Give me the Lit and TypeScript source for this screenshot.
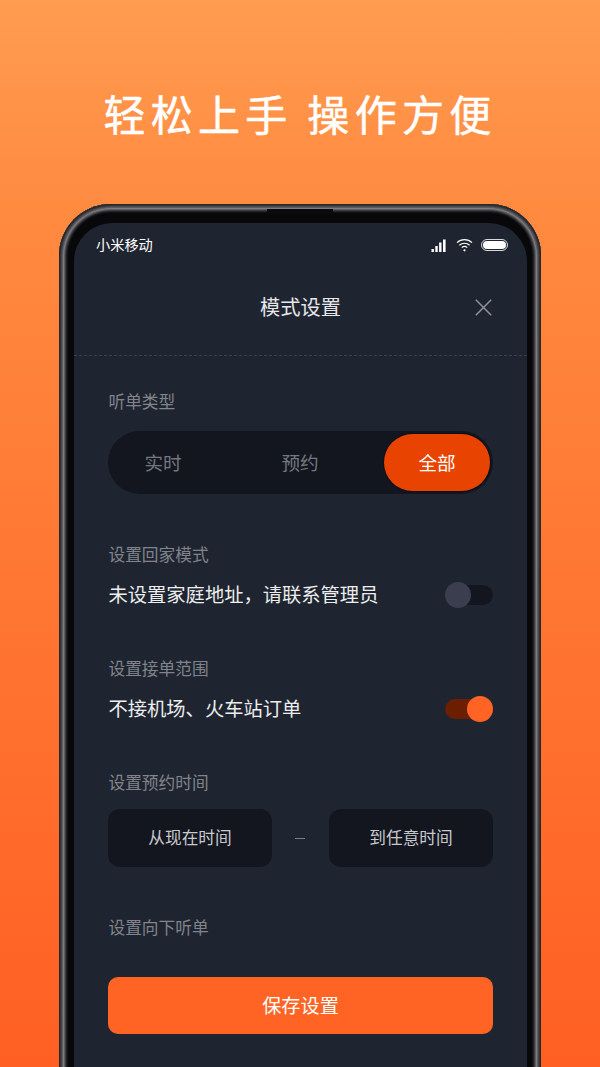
import { LitElement, html, css } from "lit";
import { customElement } from "lit/decorators.js";

@customElement("app-root")
export class AppRoot extends LitElement {
  static styles = css`
    :host {
      display: block;
      width: 600px;
      height: 1067px;
      overflow: hidden;
      font-family: "Noto Sans CJK SC", "Noto Sans", sans-serif;
      background: linear-gradient(180deg, #ff9c50 0%, #ff8a40 20%, #ff7430 60%, #ff5f22 100%);
    }
    * { box-sizing: border-box; }
    .headline {
      height: 204px;
      padding-top: 82px;
      margin: 0;
      text-align: center;
      color: #fff;
      font-size: 42px;
      line-height: 62px;
      letter-spacing: 5.3px;
      font-weight: 400;
      -webkit-text-stroke: 0.5px #fff;
    }
    .frame {
      position: relative;
      margin-left: 59px;
      width: 482px;
      height: 900px;
      padding: 19px 14px 0 15px;
      border-radius: 52px 52px 0 0;
      background: #08080a;
      box-shadow:
        inset 0 0 0 1px #28282b,
        inset 0 0 0 2px #343437,
        inset 0 0 0 3px #48484c,
        inset 0 0 0 4px #5c5c61,
        inset 0 0 0 5px #7c7c82,
        inset 0 0 0 6px #5c5c61,
        inset 0 0 0 7px #3e3e42,
        inset 0 0 0 8px #222225,
        inset 0 0 0 9px #111113;
    }
    .notch {
      position: absolute;
      left: 208px;
      top: 5px;
      width: 66px;
      height: 5px;
      border-radius: 0 0 3px 3px;
      background: #0b0b0d;
    }
    .screen {
      height: 100%;
      padding: 0 34px;
      border-radius: 38px 38px 0 0;
      background: #1f2530;
    }
    .status {
      height: 44px;
      margin: 0 -15px 0 -12px;
      display: flex;
      align-items: center;
      color: #fff;
      font-size: 14.2px;
    }
    .status span { flex: 1; padding-bottom: 2px; }
    .status svg { display: block; }
    .icons { display: flex; align-items: center; gap: 8px; }
    .signal { margin-right: 1px; }
    .nav {
      height: 89px;
      margin: 0 -34px;
      padding: 0 34px 9px;
      position: relative;
      display: flex;
      align-items: center;
      justify-content: center;
      border-bottom: 1px dashed #3a3f4a;
      color: #e6e7ea;
      font-size: 20.2px;
    }
    .close { position: absolute; right: 35px; top: 32px; display: block; }
    .label {
      color: #81848c;
      font-size: 16.7px;
      line-height: 24px;
      height: 24px;
      padding-left: 0.5px;
    }
    .first { margin-top: 33px; }
    .seg {
      margin-top: 18px;
      height: 63px;
      border-radius: 32px;
      background: #13161f;
      padding: 3px 3px 3px 2px;
      display: grid;
      grid-template-columns: 106px 168px 106px;
      align-items: center;
      text-align: center;
      color: #74777f;
      font-size: 18.6px;
    }
    .seg .tab { padding-bottom: 2px; }
    .seg .on {
      height: 57px;
      line-height: 55px;
      border-radius: 29px;
      background: #e84300;
      color: #fff;
      box-shadow: 0 0 0 1px #0d0f15;
    }
    .row {
      margin-top: 16px;
      height: 26px;
      display: flex;
      align-items: center;
      justify-content: space-between;
      color: #eceded;
      font-size: 19.3px;
      padding-left: 0.5px;
    }
    .txt { padding-bottom: 2px; }
    .sw {
      position: relative;
      width: 48px;
      height: 20px;
      border-radius: 10px;
      background: #13161f;
    }
    .sw i {
      position: absolute;
      left: 0;
      top: -3px;
      width: 26px;
      height: 26px;
      border-radius: 50%;
      background: #3b3e4f;
    }
    .sw.active { background: #6b1f00; }
    .sw.active i { left: auto; right: 0; background: #ff6424; }
    .s2, .s3, .s4 { margin-top: 48px; }
    .times {
      margin-top: 15px;
      display: grid;
      grid-template-columns: 164px 1fr 164px;
      align-items: center;
      text-align: center;
    }
    .time {
      height: 58px;
      line-height: 56px;
      border-radius: 12px;
      background: #13161f;
      color: #c8c9cc;
      font-size: 16.7px;
    }
    .dash { width: 10px; height: 1px; margin: 0 auto; background: #7a7d85; position: relative; left: -1px; }
    .s5 { margin-top: 48px; }
    .save {
      margin-top: 38px;
      height: 57px;
      line-height: 57px;
      border-radius: 10px;
      background: #ff6424;
      color: #fff;
      text-align: center;
      font-size: 19.2px;
    }
  `;

  render() {
    return html`
      <h1 class="headline">轻松上手 操作方便</h1>
      <div class="frame">
        <div class="notch"></div>
        <div class="screen">
          <div class="status">
            <span>小米移动</span>
            <div class="icons">
              <svg class="signal" width="16" height="13" viewBox="0 0 16 13" fill="#fff">
                <rect x="0.5" y="10" width="2.4" height="3"></rect>
                <rect x="4.3" y="7" width="2.4" height="6"></rect>
                <rect x="8.1" y="3.5" width="2.4" height="9.5"></rect>
                <rect x="12" y="0.5" width="2.6" height="12.5"></rect>
              </svg>
              <svg width="17" height="14" viewBox="0 0 17 14" fill="none" stroke="#fff" stroke-width="1.2">
                <path d="M1 4.6C5.2.6 11.8.6 16 4.6"></path>
                <path d="M3.4 7.2C6.2 4.6 10.8 4.6 13.6 7.2"></path>
                <path d="M5.8 9.6C7.3 8.3 9.7 8.3 11.2 9.6"></path>
                <circle cx="8.5" cy="12.3" r="1.1" fill="#fff" stroke="none"></circle>
              </svg>
              <svg width="27" height="12" viewBox="0 0 27 12">
                <rect x="0.5" y="0.5" width="26" height="11" rx="5.5" fill="none" stroke="#d8d9db" stroke-width="1"></rect>
                <rect x="2" y="2" width="23" height="8" rx="4" fill="#fff"></rect>
              </svg>
            </div>
          </div>
          <div class="nav">
            模式设置
            <svg class="close" width="17" height="17" viewBox="0 0 17 17" fill="none" stroke="#8f929a" stroke-width="1.5">
              <path d="M.8 .8L16.2 16.2M16.2 .8L.8 16.2"></path>
            </svg>
          </div>
          <div class="label first">听单类型</div>
          <div class="seg">
            <div class="tab">实时</div>
            <div class="tab">预约</div>
            <div class="on">全部</div>
          </div>
          <div class="label s2">设置回家模式</div>
          <div class="row"><span class="txt">未设置家庭地址，请联系管理员</span><div class="sw"><i></i></div></div>
          <div class="label s3">设置接单范围</div>
          <div class="row"><span class="txt">不接机场、火车站订单</span><div class="sw active"><i></i></div></div>
          <div class="label s4">设置预约时间</div>
          <div class="times">
            <div class="time">从现在时间</div>
            <div class="dash"></div>
            <div class="time">到任意时间</div>
          </div>
          <div class="label s5">设置向下听单</div>
          <div class="save">保存设置</div>
        </div>
      </div>
    `;
  }
}
